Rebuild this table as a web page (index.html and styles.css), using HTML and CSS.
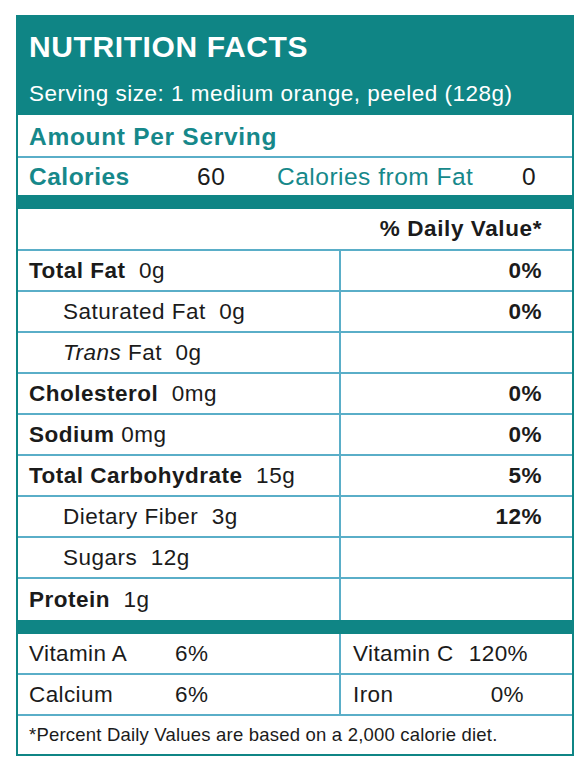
FILE: index.html
```html
<!DOCTYPE html>
<html>
  <head>
    <meta charset="utf-8" />
    <title>Nutrition Facts</title>
    <meta name="viewport" content="width=device-width,initial-scale=1" />
    <link rel="stylesheet" href="styles.css">
  </head>

  <body>
    <div class="label">
      <div class="label-header">
        <h1>NUTRITION FACTS</h1>
        <p>Serving size: 1 medium orange, peeled (128g)</p>
      </div>

      <div class="amount-row">Amount Per Serving</div>

      <div class="calories-row">
        <span class="cal-name">Calories</span>
        <span class="cal-value">60</span>
        <span class="cal-fat">Calories from Fat</span>
        <span class="cal-fat-value">0</span>
      </div>

      <div class="bar"></div>

      <div class="dv-row">% Daily Value*</div>

      <div class="nutrients">
        <div class="cell"><b>Total Fat</b>&nbsp; 0g</div>
        <div class="cell pct">0%</div>

        <div class="cell sub">Saturated Fat&nbsp; 0g</div>
        <div class="cell pct">0%</div>

        <div class="cell sub"><i>Trans</i> Fat&nbsp; 0g</div>
        <div class="cell pct"></div>

        <div class="cell"><b>Cholesterol</b>&nbsp; 0mg</div>
        <div class="cell pct">0%</div>

        <div class="cell"><b>Sodium</b> 0mg</div>
        <div class="cell pct">0%</div>

        <div class="cell"><b>Total Carbohydrate</b>&nbsp; 15g</div>
        <div class="cell pct">5%</div>

        <div class="cell sub">Dietary Fiber&nbsp; 3g</div>
        <div class="cell pct">12%</div>

        <div class="cell sub">Sugars&nbsp; 12g</div>
        <div class="cell pct"></div>

        <div class="cell"><b>Protein</b>&nbsp; 1g</div>
        <div class="cell pct"></div>
      </div>

      <div class="bar"></div>

      <div class="vitamins">
        <div class="vit-cell">
          <span class="vit-name">Vitamin A</span>
          <span>6%</span>
        </div>
        <div class="vit-cell right">
          <span>Vitamin C</span>
          <span>120%</span>
        </div>
        <div class="vit-cell">
          <span class="vit-name">Calcium</span>
          <span>6%</span>
        </div>
        <div class="vit-cell right">
          <span>Iron</span>
          <span class="iron">0%</span>
        </div>
      </div>

      <div class="footnote">*Percent Daily Values are based on a 2,000 calorie diet.</div>
    </div>
  </body>
</html>
```

FILE: styles.css
```css
body {
  margin: 0;
  padding: 15px 0 0 16px;
  font-family: "Liberation Sans", Arial, sans-serif;
  background: #fff;
  color: #1b1b1b;
}

.label {
  width: 558px;
  box-sizing: border-box;
  border: 2px solid #0f8585;
}

.label-header {
  background: #0f8585;
  color: #fff;
  height: 98px;
  padding: 0 11px;
  box-sizing: border-box;
}

.label-header h1 {
  margin: 0;
  padding-top: 13px;
  font-size: 30px;
  font-weight: bold;
  letter-spacing: 0.6px;
  line-height: 34px;
}

.label-header p {
  margin: 0;
  padding-top: 15px;
  font-size: 22.5px;
  letter-spacing: 0.5px;
  line-height: 30px;
}

.amount-row {
  height: 43px;
  box-sizing: border-box;
  border-bottom: 2px solid #5aaec8;
  padding: 2px 11px 0;
  display: flex;
  align-items: center;
  color: #16888a;
  font-weight: bold;
  font-size: 24.5px;
  letter-spacing: 0.7px;
}

.calories-row {
  height: 37px;
  padding: 0 11px;
  display: flex;
  align-items: center;
  font-size: 24.5px;
  letter-spacing: 0.5px;
}

.cal-name {
  width: 168px;
  color: #16888a;
  font-weight: bold;
}

.cal-value {
  width: 80px;
}

.cal-fat {
  width: 245px;
  color: #16888a;
}

.bar {
  height: 14px;
  background: #0f8585;
}

.dv-row {
  height: 42px;
  box-sizing: border-box;
  border-bottom: 2px solid #5aaec8;
  padding: 0 30px 0 11px;
  display: flex;
  align-items: center;
  justify-content: flex-end;
  font-weight: bold;
  font-size: 22.5px;
  letter-spacing: 0.6px;
}

.nutrients {
  display: grid;
  grid-template-columns: 321px 1fr;
}

.cell {
  height: 41px;
  box-sizing: border-box;
  border-bottom: 2px solid #5aaec8;
  padding: 0 11px;
  display: flex;
  align-items: center;
  font-size: 22.5px;
  letter-spacing: 0.5px;
  white-space: pre;
}

.cell:nth-last-child(-n+2) {
  border-bottom: none;
}

.cell.sub {
  padding-left: 45px;
}

.cell.pct {
  border-left: 2px solid #5aaec8;
  justify-content: flex-end;
  padding-right: 30px;
  font-weight: bold;
}

.vitamins {
  display: grid;
  grid-template-columns: 321px 1fr;
}

.vit-cell {
  height: 41px;
  box-sizing: border-box;
  border-bottom: 2px solid #5aaec8;
  padding: 0 11px;
  display: flex;
  align-items: center;
  font-size: 22.5px;
  letter-spacing: 0.4px;
}

.vit-name {
  width: 146px;
}

.vit-cell.right {
  border-left: 2px solid #5aaec8;
  justify-content: space-between;
  padding: 0 44px 0 12px;
}

.iron {
  margin-right: 4px;
}

.footnote {
  height: 38px;
  padding: 0 11px;
  display: flex;
  align-items: center;
  font-size: 18.5px;
  letter-spacing: 0.2px;
}
```
